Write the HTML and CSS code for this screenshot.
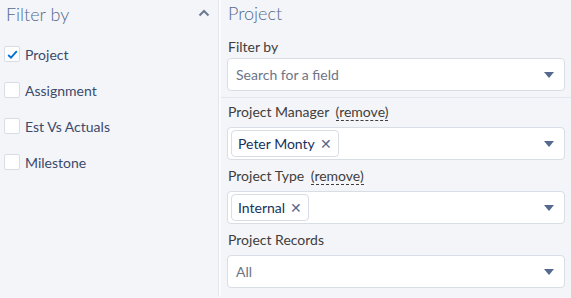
FILE: index.html
```html
<!DOCTYPE html>
<html lang="en">
<head>
    <meta charset="UTF-8">
    <meta name="viewport" content="width=device-width, initial-scale=1.0">
    <title>Filter by</title>
    <link rel="stylesheet" href="styles.css">
</head>
<body>
    <div class="layout">
        <div class="side-panel">
            <div class="panel-header">
                <span class="panel-title">Filter by</span>
                <svg class="chevron" width="12" height="8" viewBox="0 0 12 8">
                    <path d="M1.5 6.5 L6 2 L10.5 6.5" fill="none" stroke="#6b7a93" stroke-width="2"/>
                </svg>
            </div>
            <ul class="object-list">
                <li class="object-item">
                    <span class="checkbox checked">
                        <svg width="11" height="9" viewBox="0 0 11 9">
                            <path d="M1.2 5 L4 7.6 L9.8 1.2" fill="none" stroke="#0070d2" stroke-width="1.8"/>
                        </svg>
                    </span>
                    <span class="object-label">Project</span>
                </li>
                <li class="object-item">
                    <span class="checkbox"></span>
                    <span class="object-label">Assignment</span>
                </li>
                <li class="object-item">
                    <span class="checkbox"></span>
                    <span class="object-label">Est Vs Actuals</span>
                </li>
                <li class="object-item">
                    <span class="checkbox"></span>
                    <span class="object-label">Milestone</span>
                </li>
            </ul>
        </div>

        <div class="main-panel">
            <div class="panel-title main-title">Project</div>

            <div class="field field-search">
                <label class="field-label">Filter by</label>
                <div class="select-box">
                    <span class="placeholder">Search for a field</span>
                    <span class="caret"></span>
                </div>
            </div>

            <div class="field-group">
                <div class="field">
                    <label class="field-label">Project Manager <span class="remove-link">(remove)</span></label>
                    <div class="select-box has-pill">
                        <span class="pill">Peter Monty <span class="pill-close">&#x2715;</span></span>
                        <span class="caret"></span>
                    </div>
                </div>

                <div class="field">
                    <label class="field-label">Project Type <span class="remove-link">(remove)</span></label>
                    <div class="select-box has-pill">
                        <span class="pill">Internal <span class="pill-close">&#x2715;</span></span>
                        <span class="caret"></span>
                    </div>
                </div>

                <div class="field">
                    <label class="field-label">Project Records</label>
                    <div class="select-box">
                        <span class="value">All</span>
                        <span class="caret"></span>
                    </div>
                </div>
            </div>
        </div>
    </div>
</body>
</html>
```

FILE: styles.css
```css
body {
    margin: 0;
    font-family: Lato, 'Liberation Sans', sans-serif;
    color: #16325c;
    background-color: #f4f5f9;
}

.layout {
    display: flex;
    width: 571px;
    height: 298px;
    overflow: hidden;
}

.side-panel {
    width: 218px;
    flex-shrink: 0;
    background-color: #f4f5f9;
    border-right: 1px solid #e3e6ec;
    box-shadow: 1px 0 0 #fbfbfd, 2px 0 0 #fbfbfd;
    height: 296px;
}

.panel-header {
    display: flex;
    align-items: center;
    justify-content: space-between;
    height: 28px;
    padding: 0 8px 0 6px;
}

.panel-title {
    font-size: 18px;
    font-weight: 300;
    color: #54698d;
}

.chevron {
    margin-top: -2px;
}

.object-list {
    list-style: none;
    margin: 0;
    padding: 8px 0 0 4px;
}

.object-item {
    display: flex;
    align-items: center;
    height: 36px;
}

.checkbox {
    width: 14px;
    height: 14px;
    border: 1px solid #d8dde6;
    border-radius: 2px;
    background-color: white;
    display: flex;
    align-items: center;
    justify-content: center;
    margin-right: 5px;
}

.object-label {
    font-size: 14px;
    color: #3b4a6b;
}

.main-panel {
    flex: 1;
    margin-left: 2px;
    background-color: #f4f5f9;
    height: 296px;
}

.main-title {
    display: block;
    height: 28px;
    line-height: 26px;
    padding-left: 7px;
}

.field {
    display: flex;
    flex-direction: column;
}

.field-search {
    padding: 9px 6px 6px 6px;
    border-bottom: 1px solid #e3e6ec;
}

.field-search .field-label {
    margin-bottom: 1px;
}

.field-search .select-box {
    margin-bottom: 0;
}

.field-group {
    padding: 4px 6px 0 6px;
}

.field-label {
    font-size: 14px;
    line-height: 20px;
    color: #3e3e3c;
    margin-bottom: 5px;
    padding-left: 1px;
}

.remove-link {
    margin-left: 3px;
    border-bottom: 1px dashed #3e3e3c;
}

.select-box {
    height: 31px;
    border: 1px solid #d8dde6;
    border-radius: 4px;
    background-color: white;
    display: flex;
    align-items: center;
    justify-content: space-between;
    padding: 0 8px 0 8px;
    margin-bottom: 6px;
    font-size: 14px;
}

.select-box.has-pill {
    padding-left: 3px;
}

.placeholder {
    color: #6d7586;
}

.value {
    color: #6d7586;
}

.pill {
    display: flex;
    align-items: center;
    height: 25px;
    padding: 0 6px 0 6px;
    border: 1px solid #d8dde6;
    border-radius: 4px;
    color: #16325c;
}

.pill-close {
    font-size: 14px;
    font-weight: 300;
    color: #54698d;
    margin-left: 5px;
}

.caret {
    width: 0;
    height: 0;
    border-left: 5px solid transparent;
    border-right: 5px solid transparent;
    border-top: 6px solid #54698d;
    margin-right: 2px;
}
```
